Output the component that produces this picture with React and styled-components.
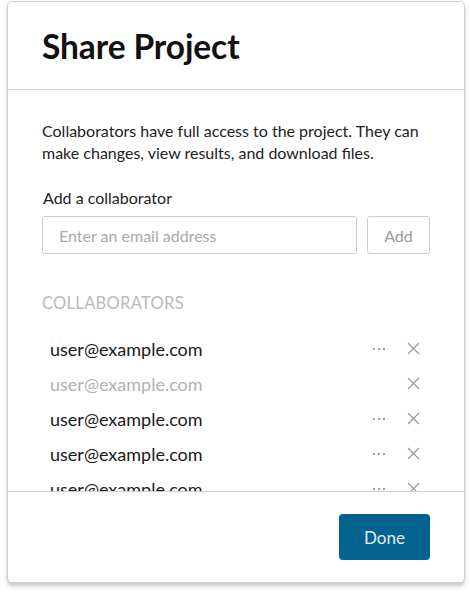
import React from 'react';
import styled, { createGlobalStyle } from 'styled-components';

const GlobalStyle = createGlobalStyle`
  html, body {
    margin: 0;
    padding: 0;
    background: #ffffff;
  }
  body {
    font-family: 'Lato', 'Liberation Sans', sans-serif;
    color: #222;
  }
`;

const Page = styled.div`
  padding: 1px 5px 12px 7px;
`;

const Dialog = styled.div`
  width: 456px;
  border: 1px solid #cfcfcf;
  border-radius: 5px;
  background: #fff;
  box-shadow: 0 3px 4px rgba(0, 0, 0, 0.22);
  display: flex;
  flex-direction: column;
  overflow: hidden;
`;

const Header = styled.div`
  height: 87px;
  padding: 0 34px;
  display: flex;
  align-items: center;
  border-bottom: 1px solid #cfcfcf;
`;

const Title = styled.h1`
  margin: 0;
  font-size: 33.5px;
  font-weight: 700;
  color: #111;
  letter-spacing: -0.1px;
`;

const Body = styled.div`
  height: 401px;
  overflow: hidden;
  padding: 30px 34px 0 34px;
  box-sizing: border-box;
`;

const Intro = styled.p`
  margin: 0;
  font-size: 16px;
  line-height: 22px;
  color: #222;
`;

const Label = styled.div`
  margin-top: 24px;
  font-size: 16px;
  color: #222;
  padding-left: 1px;
`;

const AddRow = styled.div`
  display: flex;
  gap: 10px;
  margin-top: 9px;
`;

const EmailInput = styled.input`
  flex: 1;
  height: 38px;
  box-sizing: border-box;
  border: 1px solid #cdcdcd;
  border-radius: 3px;
  padding: 0 16px;
  font-family: 'Lato', sans-serif;
  font-size: 16px;
  color: #222;
  outline: none;
  &::placeholder {
    color: #a9a9a9;
  }
`;

const AddButton = styled.button`
  width: 63px;
  height: 38px;
  box-sizing: border-box;
  border: 1px solid #cdcdcd;
  border-radius: 3px;
  background: #fff;
  font-family: 'Lato', sans-serif;
  font-size: 16px;
  color: #9a9a9a;
`;

const SectionTitle = styled.div`
  margin-top: 39px;
  font-size: 16.5px;
  color: #b9b9b9;
  letter-spacing: 0.3px;
`;

const List = styled.ul`
  list-style: none;
  margin: 18px 0 0 0;
  padding: 0;
`;

const Row = styled.li`
  height: 35px;
  display: flex;
  align-items: center;
  padding: 0 10px 0 8px;
`;

const Email = styled.span`
  flex: 1;
  font-size: 18px;
  color: ${p => (p.$pending ? '#b2b2b2' : '#1a1a1a')};
`;

const Actions = styled.div`
  display: flex;
  align-items: center;
  gap: 20px;
`;

const IconSlot = styled.span`
  width: 14px;
  height: 14px;
  display: flex;
  align-items: center;
  justify-content: center;
  color: #8a8a8a;
`;

const Footer = styled.div`
  height: 90px;
  border-top: 1px solid #cfcfcf;
  display: flex;
  align-items: center;
  justify-content: flex-end;
  padding: 0 34px;
`;

const DoneButton = styled.button`
  width: 91px;
  height: 46px;
  border: none;
  border-radius: 4px;
  background: #02638f;
  color: #e4eef3;
  font-family: 'Lato', sans-serif;
  font-size: 17px;
`;

const Dots = () => (
  <svg width="14" height="4" viewBox="0 0 14 4">
    <circle cx="2" cy="2" r="1.1" fill="#888" />
    <circle cx="7" cy="2" r="1.1" fill="#888" />
    <circle cx="12" cy="2" r="1.1" fill="#888" />
  </svg>
);

const Cross = () => (
  <svg width="13" height="13" viewBox="0 0 13 13">
    <path d="M1 1 L12 12 M12 1 L1 12" stroke="#999" strokeWidth="1.2" fill="none" />
  </svg>
);

const collaborators = [
  { email: 'user@example.com' },
  { email: 'user@example.com', pending: true },
  { email: 'user@example.com' },
  { email: 'user@example.com' },
  { email: 'user@example.com' },
];

export default function App() {
  return (
    <Page>
      <GlobalStyle />
      <Dialog>
        <Header>
          <Title>Share Project</Title>
        </Header>
        <Body>
          <Intro>
            Collaborators have full access to the project. They can make changes, view results,
            and download files.
          </Intro>
          <Label>Add a collaborator</Label>
          <AddRow>
            <EmailInput placeholder="Enter an email address" />
            <AddButton>Add</AddButton>
          </AddRow>
          <SectionTitle>COLLABORATORS</SectionTitle>
          <List>
            {collaborators.map((c, idx) => (
              <Row key={idx}>
                <Email $pending={c.pending}>{c.email}</Email>
                <Actions>
                  <IconSlot>{!c.pending && <Dots />}</IconSlot>
                  <IconSlot>
                    <Cross />
                  </IconSlot>
                </Actions>
              </Row>
            ))}
          </List>
        </Body>
        <Footer>
          <DoneButton>Done</DoneButton>
        </Footer>
      </Dialog>
    </Page>
  );
}
